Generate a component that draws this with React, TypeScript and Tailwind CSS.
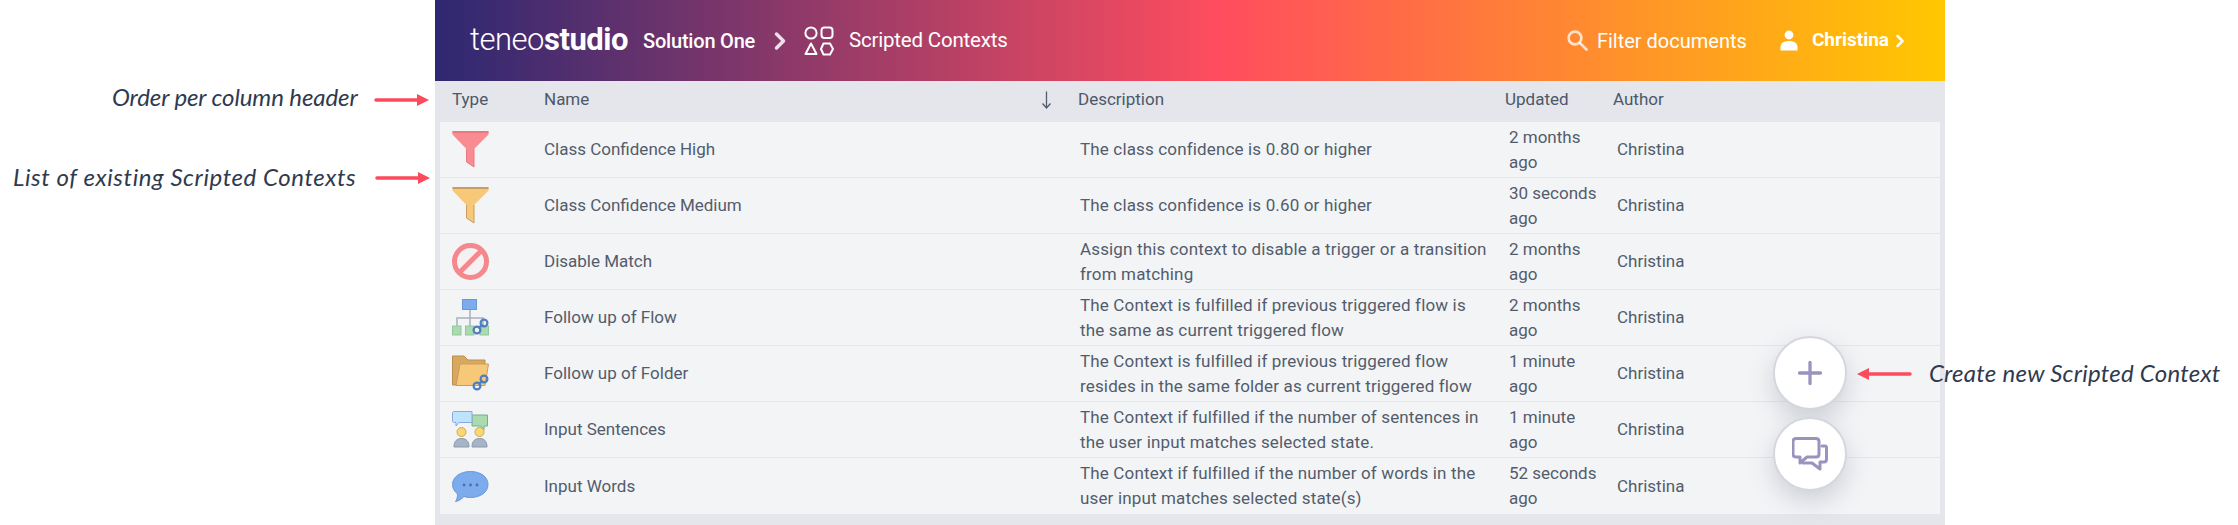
import { ChevronRight, Plus } from "lucide-react";

const rows = [
  { icon: <FunnelIcon fill="#f98c90" edge="#e8797e" />, name: "Class Confidence High", desc: ["The class confidence is 0.80 or higher"], updated: ["2 months", "ago"] },
  { icon: <FunnelIcon fill="#f6c877" edge="#c99c62" />, name: "Class Confidence Medium", desc: ["The class confidence is 0.60 or higher"], updated: ["30 seconds", "ago"] },
  { icon: <BanIcon />, name: "Disable Match", desc: ["Assign this context to disable a trigger or a transition", "from matching"], updated: ["2 months", "ago"] },
  { icon: <FlowIcon />, name: "Follow up of Flow", desc: ["The Context is fulfilled if previous triggered flow is", "the same as current triggered flow"], updated: ["2 months", "ago"] },
  { icon: <FolderIcon />, name: "Follow up of Folder", desc: ["The Context is fulfilled if previous triggered flow", "resides in the same folder as current triggered flow"], updated: ["1 minute", "ago"] },
  { icon: <SentencesIcon />, name: "Input Sentences", desc: ["The Context if fulfilled if the number of sentences in", "the user input matches selected state."], updated: ["1 minute", "ago"] },
  { icon: <WordsIcon />, name: "Input Words", desc: ["The Context if fulfilled if the number of words in the", "user input matches selected state(s)"], updated: ["52 seconds", "ago"] },
];

function FunnelIcon({ fill, edge }: { fill: string; edge: string }) {
  return (
    <svg width="37" height="37" viewBox="0 0 37 37">
      <path d="M0.5 0.5H36.5V3.5L22 18V36L14.5 31V18L0.5 3.5Z" fill={fill} />
      <path d="M0.5 1H36.5" stroke={edge} strokeWidth="2" />
      <path d="M14.5 18V31L22 36V18" fill="none" stroke={edge} strokeWidth="1" />
    </svg>
  );
}

function BanIcon() {
  return (
    <svg width="37" height="37" viewBox="0 0 37 37">
      <circle cx="18.5" cy="18.5" r="16" fill="#f5f0f1" stroke="#f4888c" strokeWidth="5" />
      <path d="M7 30L30 7" stroke="#f4888c" strokeWidth="5" />
    </svg>
  );
}

function ChainLinks() {
  return (
    <g fill="none" stroke="#4f7fbd" strokeWidth="2.2">
      <circle cx="25" cy="31" r="3.4" />
      <circle cx="32" cy="24" r="3.4" />
      <path d="M26 29L31 26" />
    </g>
  );
}

function FlowIcon() {
  return (
    <svg width="37" height="37" viewBox="0 0 37 37">
      <path d="M18 11V27M5 27V19H31V27" fill="none" stroke="#a8b0bd" strokeWidth="1.5" />
      <rect x="10.5" y="0.5" width="14" height="10" fill="#7cabee" stroke="#6b97d4" />
      <rect x="0.5" y="27" width="8.5" height="9" fill="#a9dab0" stroke="#93c79b" />
      <rect x="13.5" y="27" width="8.5" height="9" fill="#a9dab0" stroke="#93c79b" />
      <rect x="28" y="27" width="8.5" height="9" fill="#a9dab0" stroke="#93c79b" />
      <ChainLinks />
    </svg>
  );
}

function FolderIcon() {
  return (
    <svg width="37" height="37" viewBox="0 0 37 37">
      <path d="M0.5 1H12L16 5H33V11H8L4.5 30H0.5Z" fill="#d9a85f" stroke="#bd8f4f" />
      <path d="M4 30.5L8 9H36.5L33 30.5Z" fill="#f6c877" stroke="#c99c62" />
      <ChainLinks />
    </svg>
  );
}

function SentencesIcon() {
  return (
    <svg width="37" height="37" viewBox="0 0 37 37">
      <path d="M20 4H35.5V15H32V18.5L29 15H20Z" fill="#a9dab0" stroke="#74b184" />
      <path d="M2 0.5H20V11.5H7L4 15V11.5H2C1 11.5 0.5 11 0.5 10V2C0.5 1 1 0.5 2 0.5Z" fill="#bfe3fd" stroke="#8aa9dc" />
      <circle cx="9.5" cy="21" r="4.5" fill="#f9d776" stroke="#d0a94f" />
      <circle cx="27.5" cy="21" r="4.5" fill="#f9d776" stroke="#d0a94f" />
      <path d="M2 36C2 30 5 27.5 9.5 27.5S17 30 17 36Z" fill="#a6b4c6" stroke="#8b99ab" />
      <path d="M20 36C20 30 23 27.5 27.5 27.5S35 30 35 36Z" fill="#a6b4c6" stroke="#8b99ab" />
    </svg>
  );
}

function WordsIcon() {
  return (
    <svg width="37" height="31" viewBox="0 0 37 31">
      <path d="M18.5 0.5C28.5 0.5 36 5.8 36 13.5S28.5 26.5 18.5 26.5C16 26.5 14 26.2 12 25.5C9.5 28 7 30 3.5 30.5C5 28.5 5.5 26 5.5 23C2.5 20.5 0.5 17.5 0.5 13.5C0.5 5.8 8.5 0.5 18.5 0.5Z" fill="#7cabee" stroke="#6b97d4" />
      <circle cx="12" cy="14" r="1.4" fill="#4f6fa6" />
      <circle cx="18.5" cy="14" r="1.4" fill="#4f6fa6" />
      <circle cx="25" cy="14" r="1.4" fill="#4f6fa6" />
    </svg>
  );
}

function ContextsIcon() {
  return (
    <svg width="30" height="30" viewBox="0 0 30 30" fill="none" stroke="white" strokeWidth="2">
      <circle cx="7" cy="7" r="5.6" />
      <rect x="17.5" y="1.6" width="11" height="10.5" rx="3" />
      <path d="M7 17.5L12.5 28H1.5Z" strokeLinejoin="round" />
      <path d="M19.5 17.5H26L29 23L26 28.5H19.5L17 23Z" strokeLinejoin="round" />
    </svg>
  );
}

function SearchIcon() {
  return (
    <svg width="21" height="21" viewBox="0 0 21 21" fill="none" stroke="white" strokeOpacity="0.75" strokeWidth="2.6" strokeLinecap="round">
      <circle cx="8" cy="8" r="6.4" />
      <path d="M12.8 12.8L19.5 19.5" />
    </svg>
  );
}

function UserIcon() {
  return (
    <svg width="18" height="21" viewBox="0 0 18 21" fill="white">
      <circle cx="9" cy="5" r="4.4" />
      <path d="M0.5 20.5V17C0.5 13 4 11 9 11S17.5 13 17.5 17V20.5Z" />
    </svg>
  );
}

function SortArrow() {
  return (
    <svg width="11" height="18" viewBox="0 0 11 18" fill="none" stroke="#525c6c" strokeWidth="1.3">
      <path d="M5.5 0.5V17M1.5 12.5L5.5 17L9.5 12.5" />
    </svg>
  );
}

function ChatIcon() {
  return (
    <svg width="36" height="34" viewBox="0 0 36 34" fill="none" stroke="#9b93bd" strokeWidth="3" strokeLinejoin="round" strokeLinecap="round">
      <path d="M4 1.5H24C26 1.5 27 2.5 27 4.5V17C27 19 26 20 24 20H15L8 26V20H4C2 20 1 19 1 17V4.5C1 2.5 2 1.5 4 1.5Z" />
      <path d="M30 9H33C34 9 34.5 10 34.5 11V22C34.5 24 33.5 25 32 25H28V32L20 26H11" />
    </svg>
  );
}

function Arrow({ left = false, className }: { left?: boolean; className: string }) {
  return (
    <svg className={className} width="55" height="14" viewBox="0 0 55 14">
      {left ? (
        <>
          <path d="M12 7H53" stroke="#fb4b5c" strokeWidth="3.5" strokeLinecap="round" />
          <path d="M0 7L12 1V13Z" fill="#fb4b5c" />
        </>
      ) : (
        <>
          <path d="M2 7H43" stroke="#fb4b5c" strokeWidth="3.5" strokeLinecap="round" />
          <path d="M55 7L43 1V13Z" fill="#fb4b5c" />
        </>
      )}
    </svg>
  );
}

const noteClass = "absolute whitespace-nowrap text-[24px] leading-none italic text-[#2f3a4f] font-['Lato',sans-serif]";

export default function App() {
  return (
    <div className="relative h-[525px] w-[2238px] overflow-hidden bg-white font-['Roboto',sans-serif]">
      <div className="ml-[435px] flex h-[525px] w-[1510px] flex-col bg-[#e4e6eb] text-[#525c6c]">
        <header className="flex h-[81px] items-center bg-[linear-gradient(90deg,#2d2872_0%,#ff4d5e_52%,#ffc800_100%)] text-white">
          <div className="ml-[35px] w-[173px] text-[31px] tracking-[-0.5px]">
            <span className="font-light">teneo</span>
            <span className="font-bold">studio</span>
          </div>
          <span className="w-[123px] text-[20px] font-medium tracking-[-0.2px]">Solution One</span>
          <ChevronRight className="mr-[10px] h-7 w-7 text-white/85" strokeWidth={3} />
          <ContextsIcon />
          <span className="ml-[15px] text-[20.5px] tracking-[-0.2px]">Scripted Contexts</span>
          <div className="ml-auto flex items-center">
            <SearchIcon />
            <span className="ml-[9px] w-[183px] text-[20px]">Filter documents</span>
            <UserIcon />
            <span className="ml-[14px] text-[19px] font-bold">Christina</span>
            <ChevronRight className="mr-[35px] ml-[1px] h-[20px] w-[20px]" strokeWidth={3} />
          </div>
        </header>

        <div className="grid h-[41px] grid-cols-[92px_534px_427px_108px_1fr] items-center pb-[3px] pl-[17px] text-[17px] text-[#4d5869]">
          <span>Type</span>
          <div className="flex items-center justify-between pr-[26px]">
            <span>Name</span>
            <SortArrow />
          </div>
          <span>Description</span>
          <span>Updated</span>
          <span>Author</span>
        </div>

        <div className="mx-[5px] grid h-[392px] grid-rows-7 bg-[#f3f4f6]">
          {rows.map((row) => (
            <div key={row.name} className="grid grid-cols-[104px_536px_429px_108px_1fr] items-center border-b border-[#e4e6ea] text-[17px] leading-[25px] last:border-b-0">
              <div className="flex pl-3">{row.icon}</div>
              <span>{row.name}</span>
              <div className="tracking-[0.15px]">
                {row.desc.map((line) => (
                  <div key={line} className="whitespace-nowrap">{line}</div>
                ))}
              </div>
              <div>
                {row.updated.map((line) => (
                  <div key={line}>{line}</div>
                ))}
              </div>
              <span>Christina</span>
            </div>
          ))}
        </div>
      </div>

      <span className={`${noteClass} top-[85px] left-[112px] tracking-[-0.1px]`}>Order per column header</span>
      <Arrow className="absolute top-[93px] left-[374px]" />
      <span className={`${noteClass} top-[165px] left-[13px] tracking-[0.58px]`}>List of existing Scripted Contexts</span>
      <Arrow className="absolute top-[171px] left-[375px]" />

      <button className="absolute top-[336px] left-[1773px] flex h-[74px] w-[74px] items-center justify-center rounded-full border-2 border-[#d5d7de] bg-white text-[#9b93bd] shadow-[0_10px_24px_rgba(120,125,145,0.3)]">
        <Plus className="h-9 w-9" strokeWidth={2.2} />
      </button>
      <button className="absolute top-[417px] left-[1773px] flex h-[74px] w-[74px] items-center justify-center rounded-full border-2 border-[#d5d7de] bg-white shadow-[0_10px_24px_rgba(120,125,145,0.3)]">
        <ChatIcon />
      </button>

      <Arrow left className="absolute top-[367px] left-[1857px]" />
      <span className={`${noteClass} top-[361px] left-[1929px] tracking-[0.25px]`}>Create new Scripted Context</span>
    </div>
  );
}
